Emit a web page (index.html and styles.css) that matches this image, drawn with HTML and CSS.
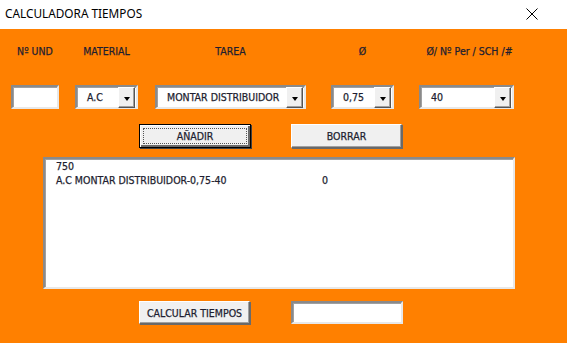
FILE: index.html
```html
<!DOCTYPE html>
<html lang="es">
<head>
<meta charset="utf-8">
<title>CALCULADORA TIEMPOS</title>
<link rel="stylesheet" href="styles.css">
</head>
<body>
<div class="window">
  <div class="titlebar">
    <span class="title">CALCULADORA TIEMPOS</span>
    <svg class="close" width="12" height="12" viewBox="0 0 12 12"><path d="M0.5 0.5 L11.5 11.5 M11.5 0.5 L0.5 11.5" stroke="#000" stroke-width="1" fill="none"/></svg>
  </div>
  <div class="form">
    <div class="fields">
      <div class="field f-und">
        <span class="label">Nº UND</span>
        <div class="sunken textbox"></div>
      </div>
      <div class="field f-mat">
        <span class="label">MATERIAL</span>
        <div class="sunken combo"><span class="value">A.C</span><span class="drop"><i class="arrow"></i></span></div>
      </div>
      <div class="field f-tarea">
        <span class="label">TAREA</span>
        <div class="sunken combo"><span class="value">MONTAR DISTRIBUIDOR</span><span class="drop"><i class="arrow"></i></span></div>
      </div>
      <div class="field f-diam">
        <span class="label">Ø</span>
        <div class="sunken combo"><span class="value">0,75</span><span class="drop"><i class="arrow"></i></span></div>
      </div>
      <div class="field f-sch">
        <span class="label">Ø/ Nº Per / SCH /#</span>
        <div class="sunken combo"><span class="value">40</span><span class="drop"><i class="arrow"></i></span></div>
      </div>
    </div>
    <div class="buttons">
      <button class="btn default"><span class="focus">AÑADIR</span></button>
      <button class="btn">BORRAR</button>
    </div>
    <div class="sunken listbox">
      <div class="row">750</div>
      <div class="row"><span class="cell">A.C MONTAR DISTRIBUIDOR-0,75-40</span><span>0</span></div>
    </div>
    <div class="bottom">
      <button class="btn">CALCULAR TIEMPOS</button>
      <div class="sunken result"></div>
    </div>
  </div>
</div>
</body>
</html>
```
FILE: styles.css
```css
* { box-sizing: border-box; }
html, body { margin: 0; padding: 0; }
body {
  width: 567px;
  height: 343px;
  overflow: hidden;
  background: #ff8000;
  font-family: "DejaVu Sans Condensed", "Liberation Sans", Arial, sans-serif;
  font-size: 10.5px;
  color: #1e1e30;
  white-space: nowrap;
  -webkit-text-stroke: 0.25px #1e1e30;
}
.window { width: 567px; height: 343px; display: flex; flex-direction: column; }
.titlebar {
  height: 29px;
  background: #fff;
  display: flex;
  align-items: center;
  padding: 0 29px 0 5px;
  justify-content: space-between;
  flex-shrink: 0;
}
.title {
  font-family: "Noto Sans", "Open Sans", sans-serif;
  font-size: 11.8px;
  color: #000;
  -webkit-text-stroke: 0;
  position: relative;
  top: -2px;
}
.close { position: relative; top: -1px; }
.form {
  flex: 1;
  background: #ff8000;
  padding: 16px 0 0 11px;
  display: flex;
  flex-direction: column;
}
.fields { display: flex; align-items: flex-start; }
.field { display: flex; flex-direction: column; align-items: center; }
.label { height: 13px; line-height: 13px; margin-bottom: 27px; }
.f-und { width: 48px; }
.f-mat { width: 63px; margin-left: 16px; }
.f-tarea { width: 151px; margin-left: 17px; }
.f-diam { width: 63px; margin-left: 25px; }
.f-sch { width: 95px; margin-left: 25px; }
.f-sch .label { position: relative; left: 3px; }

.sunken {
  background: #fff;
  border-style: solid;
  border-width: 2px;
  border-color: #8a8a8a #e8e8e8 #e8e8e8 #8a8a8a;
  box-shadow: inset 1px 1px 0 #a0a0a0;
}
.textbox { width: 48px; height: 24px; }
.combo {
  width: 100%;
  height: 24px;
  display: flex;
  align-items: center;
  justify-content: space-between;
  padding: 0 1px 0 10px;
}
.value { line-height: 13px; }
.drop {
  width: 17px;
  height: 21px;
  background: #f0f0f0;
  border-style: solid;
  border-width: 1px;
  border-color: #fff #555 #555 #fff;
  box-shadow: inset -1px -1px 0 #a0a0a0;
  display: flex;
  align-items: center;
  justify-content: center;
  padding-top: 4px;
}
.arrow {
  width: 0; height: 0;
  border-left: 3.5px solid transparent;
  border-right: 3.5px solid transparent;
  border-top: 4px solid #000;
}
.buttons {
  display: flex;
  margin: 15px 0 0 128px;
  gap: 40px;
}
.btn {
  font-family: "DejaVu Sans Condensed", "Liberation Sans", Arial, sans-serif;
  font-size: 10.5px;
  color: #1e1e30;
  -webkit-text-stroke: 0.25px #1e1e30;
  background: #f0f0f0;
  width: 111px;
  height: 24px;
  padding: 0;
  white-space: nowrap;
  border-style: solid;
  border-width: 1px;
  border-color: #fff #696969 #696969 #fff;
  box-shadow: inset -1px -1px 0 #a0a0a0, 1px 1px 0 #6a6a6a;
  display: flex;
  align-items: center;
  justify-content: center;
}
.btn.default {
  width: 112px;
  border: 1px solid #000;
  box-shadow: inset 1px 1px 0 #fff, inset -2px -2px 0 #696969, 1px 1px 0 #404040;
  padding: 3px;
}
.focus {
  width: 100%;
  height: 100%;
  border: 1px dotted #555;
  display: flex;
  align-items: center;
  justify-content: center;
}
.listbox {
  width: 472px;
  height: 132px;
  margin: 9px 0 0 32px;
  padding: 1px 11px;
}
.row { display: flex; height: 13px; line-height: 13px; margin-bottom: 1px; }
.cell { width: 266px; }
.bottom {
  display: flex;
  margin: 12px 0 0 128px;
  gap: 41px;
}
.bottom .btn { height: 23px; }
.result { width: 112px; height: 23px; }
```
